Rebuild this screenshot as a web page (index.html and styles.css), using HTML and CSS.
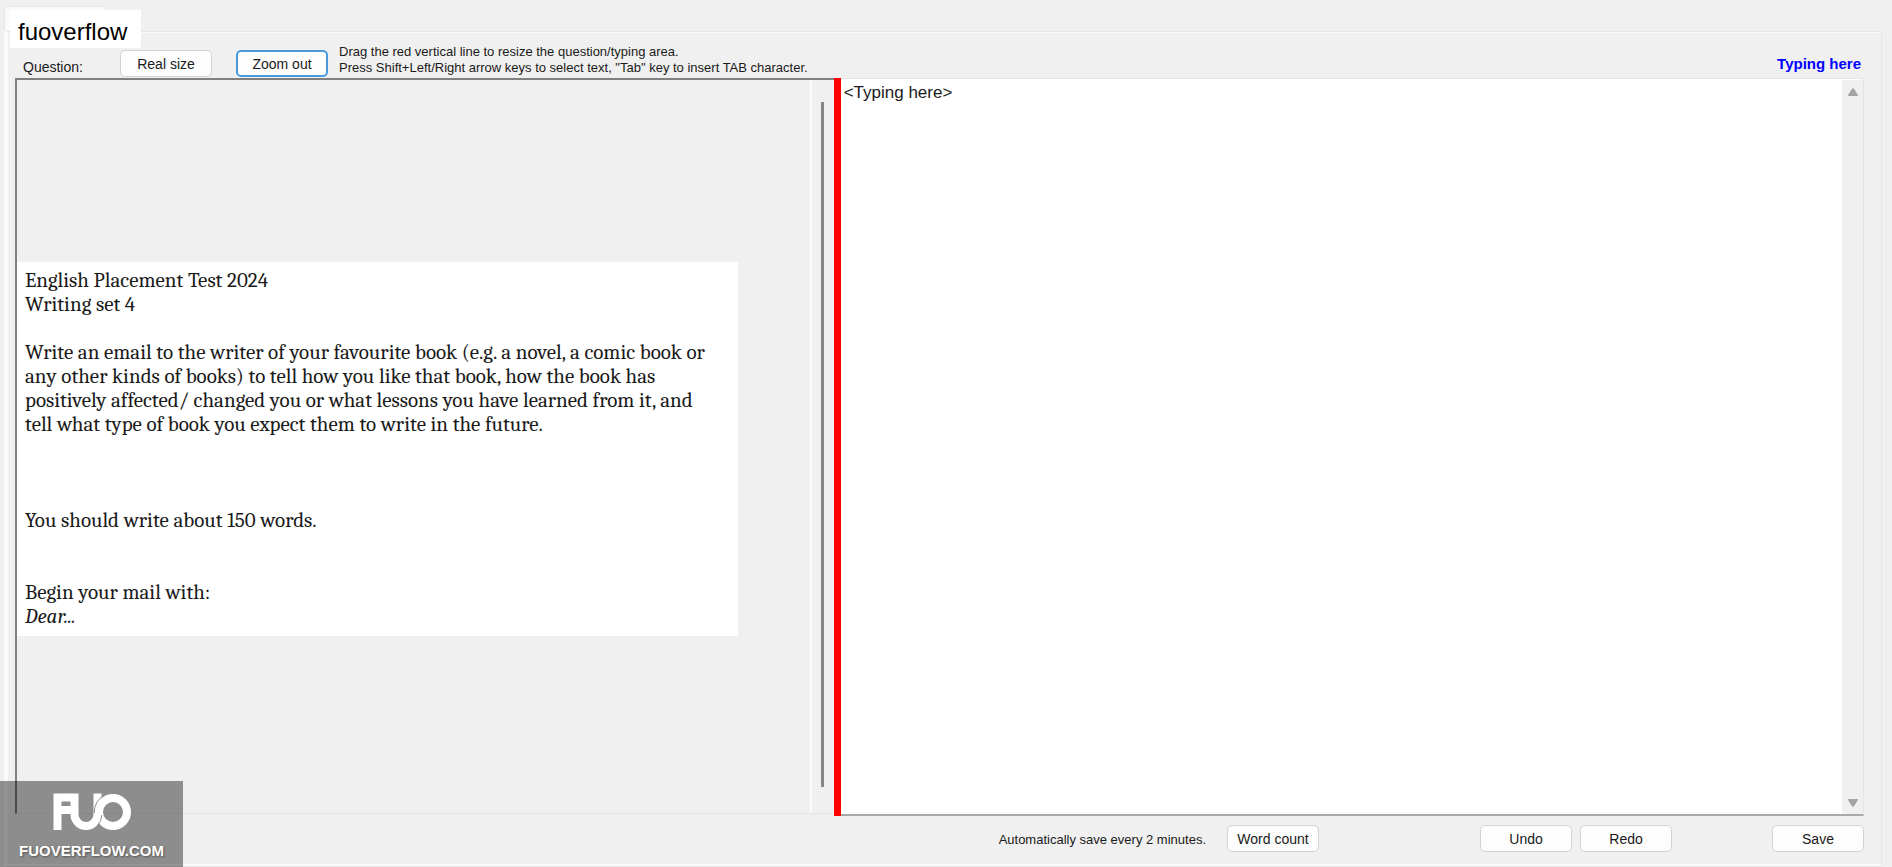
FILE: index.html
```html
<!DOCTYPE html>
<html lang="en">
<head>
  <meta charset="UTF-8" />
  <meta name="viewport" content="width=device-width, initial-scale=1" />
  <title>fuoverflow</title>
  <link rel="stylesheet" href="styles.css">
</head>
<body>
  <div class="tab"><h1 class="tab-title">fuoverflow</h1></div>

  <main class="panel">
    <div class="toolbar">
      <span class="question-label">Question:</span>
      <button type="button" class="btn">Real size</button>
      <button type="button" class="btn btn-active">Zoom out</button>
      <p class="help">Drag the red vertical line to resize the question/typing area.<br />
      Press Shift+Left/Right arrow keys to select text, "Tab" key to insert TAB character.</p>
      <label class="typing-label" for="answer">Typing here</label>
    </div>

    <div class="workspace">
      <section class="question">
        <div class="question-view">
          <article class="sheet">
            <p>English Placement Test 2024<br />Writing set 4</p>
            <p>Write an email to the writer of your favourite book (e.g. a novel, a comic book or<br />
            any other kinds of books) to tell how you like that book, how the book has<br />
            positively affected/ changed you or what lessons you have learned from it, and<br />
            tell what type of book you expect them to write in the future.</p>
            <p class="length">You should write about 150 words.</p>
            <p class="begin">Begin your mail with:<br /><em>Dear...</em></p>
          </article>
        </div>
        <div class="question-scroll"><div class="thumb"></div></div>
      </section>

      <div class="splitter"></div>

      <section class="typing">
        <textarea id="answer" class="answer" spellcheck="false">&lt;Typing here&gt;</textarea>
        <div class="typing-scroll">
          <svg width="10" height="8" viewBox="0 0 10 8"><path d="M1 8Q-.5 8 .4 6.600L4 .8Q5-.5 6 .8L9.600 6.600Q10.500 8 9 8Z" fill="#a3a3a3"/></svg>
          <svg width="10" height="8" viewBox="0 0 10 8"><path d="M1 0Q-.5 0 .4 1.400L4 7.200Q5 8.500 6 7.200L9.600 1.400Q10.500 0 9 0Z" fill="#a3a3a3"/></svg>
        </div>
      </section>
    </div>

    <div class="actions">
      <span class="autosave">Automatically save every 2 minutes.</span>
      <button type="button" class="btn">Word count</button>
      <div class="history">
        <button type="button" class="btn">Undo</button>
        <button type="button" class="btn">Redo</button>
      </div>
      <button type="button" class="btn">Save</button>
    </div>
  </main>

  <div class="watermark">
    <svg class="logo" width="78" height="38" viewBox="0 0 78 38" fill="none" stroke="#fff" stroke-width="8">
      <path d="M4.500 37V.5M1 4.500H18M8 17H18"/>
      <path d="M21.500 .5V21.500A11.500 11.500 0 0 0 44.500 21.500V.5"/>
      <circle cx="60" cy="19" r="14"/>
      <path d="M41.300 20A18.700 18.700 0 0 1 52 2" stroke="#8e8e8e" stroke-width="1"/>
      <path d="M48.800 22A15.800 15.800 0 0 1 44.500 32.500" stroke="#8e8e8e" stroke-width="1"/>
    </svg>
    <span class="site">FUOVERFLOW.COM</span>
  </div>
</body>
</html>
```
FILE: styles.css
```css
:root {
  --bg: #f0f0f0;
  --line: #e5e5e5;
  --light: #fafafa;
  --text: #1a1a1a;
}

* {
  box-sizing: border-box;
}

body {
  display: flex;
  flex-direction: column;
  min-height: 100vh;
  margin: 0;
  padding: 6px 10px 0 4px;
  background: var(--bg);
  color: var(--text);
  font-family: "Liberation Sans", Arial, sans-serif;
  font-size: 14px;
}

p {
  margin: 0;
}

.tab {
  position: relative;
  width: 102px;
  height: 25px;
  background: var(--light);
  border: 1px solid var(--line);
  border-bottom: 0;
}

/* title card sits over the tab and the panel edge */
.tab-title {
  position: absolute;
  top: 3px;
  left: 5px;
  margin: 0;
  padding: 6px 14px 0 8px;
  background: #fff;
  color: #000;
  font-size: 24px;
  font-weight: normal;
  line-height: 32px;
}

.panel {
  flex: 1;
  display: flex;
  flex-direction: column;
  padding: 0 17px 0 7px;
  border: 1px solid var(--line);
  box-shadow: inset 0 1px var(--light), inset 0 -2px var(--light);
  border-left: 4px solid var(--light);
}

.toolbar {
  display: flex;
  align-items: flex-end;
  height: 46px;
  padding-bottom: 1px;
}

.question-label {
  width: 97px;
  margin-left: 8px;
  line-height: 20px;
}

.btn {
  width: 92px;
  height: 27px;
  padding: 0;
  border: 1px solid #d2d2d2;
  border-radius: 5px;
  background: #fdfdfd;
  color: var(--text);
  font: inherit;
}

.btn-active {
  margin-left: 24px;
  border: 2px solid #4a9ade;
}

.help {
  margin-left: 11px;
  padding-bottom: 1px;
  font-size: 13px;
  line-height: 16px;
  white-space: nowrap;
}

.typing-label {
  margin-left: auto;
  padding: 0 3px 3px 0;
  color: #00f;
  font-size: 15px;
  font-weight: bold;
  line-height: 20px;
}

.workspace {
  flex: 1;
  display: grid;
  grid-template-columns: 4fr 7px 5fr;
}

.question {
  display: flex;
  margin-bottom: 2px;
  border-top: 2px solid #808080;
  border-left: 2px solid #808080;
  border-bottom: 1px solid var(--line);
}

.question-view {
  flex: 1;
  display: flex;
  align-items: center;
}

.sheet {
  width: 91%;
  margin-top: 4px;
  padding: 6px 8px 8px;
  background: #fff;
  font-family: Cambria, Caladea, "Liberation Serif", serif;
  font-size: 21px;
  line-height: 24px;
  white-space: nowrap;
}

.sheet p + p {
  margin-top: 24px;
}

.sheet p.length {
  margin-top: 72px;
}

.sheet p.begin {
  margin-top: 48px;
}

.question-scroll {
  display: flex;
  justify-content: center;
  width: 24px;
  padding: 22px 0 26px;
  border-left: 2px solid var(--light);
}

.thumb {
  width: 3px;
  background: #868686;
}

.splitter {
  background: #f00;
  cursor: col-resize;
}

.typing {
  display: flex;
  background: #fff;
  border: 1px solid var(--line);
  border-left: 0;
  border-bottom: 2px solid #a9a9a9;
}

.answer {
  flex: 1;
  padding: 3px;
  border: 0;
  outline: 0;
  resize: none;
  background: #fff;
  color: var(--text);
  font-family: inherit;
  font-size: 17px;
  line-height: 22px;
}

.typing-scroll {
  display: flex;
  flex-direction: column;
  align-items: center;
  justify-content: space-between;
  width: 21px;
  margin-top: 1px;
  padding: 8px 0 7px;
  background: var(--bg);
}

.actions {
  display: flex;
  align-items: flex-start;
  justify-content: flex-end;
  height: 50px;
  padding-top: 9px;
}

.autosave {
  margin-right: 21px;
  font-size: 13px;
  line-height: 30px;
}

.history {
  display: flex;
  gap: 8px;
  margin: 0 100px 0 161px;
}

.watermark {
  position: absolute;
  bottom: 0;
  left: 0;
  display: flex;
  flex-direction: column;
  align-items: center;
  width: 183px;
  height: 86px;
  padding-top: 12px;
  background: rgba(0, 0, 0, 0.41);
  color: #fff;
}

.site {
  margin-top: 8px;
  font-size: 15px;
  font-weight: bold;
  line-height: 24px;
  text-shadow: 1px 1px 2px #555;
}
```
